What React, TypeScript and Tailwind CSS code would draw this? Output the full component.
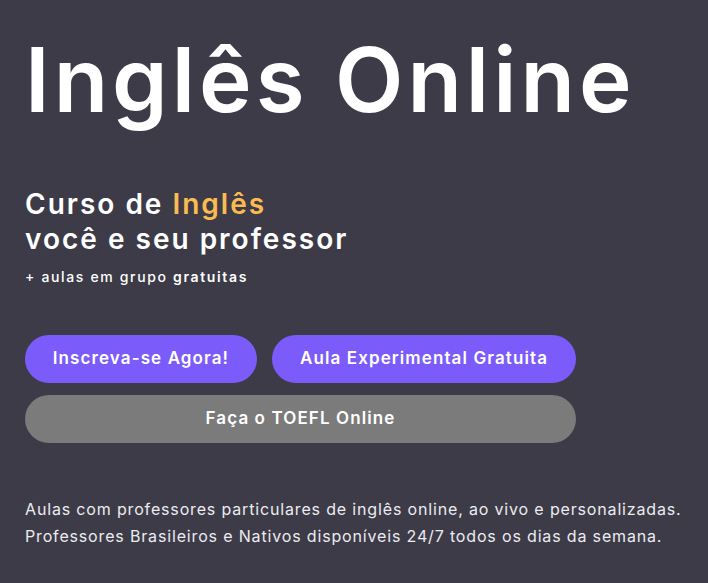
const App = () => {
    return (
        <div className="min-h-screen w-full bg-[#3c3b47] px-[25px] pt-[35px] pb-10 text-white font-['Inter',sans-serif]">
            <h1 className="text-[89px] leading-none font-semibold tracking-[4px]">Inglês Online</h1>

            <div className="mt-[63px]">
                <h2 className="text-[28px] leading-[35px] font-semibold tracking-[2px]">
                    Curso de <span className="text-[#fcbb51]">Inglês</span>
                    <br />
                    você e seu professor
                </h2>
                <p className="mt-[10px] text-sm font-medium tracking-[1.65px]">
                    + aulas em grupo <span className="font-semibold">gratuitas</span>
                </p>
            </div>

            <div className="mt-[48px] w-[551px] flex flex-col gap-3">
                <div className="flex gap-[15px]">
                    <button className="h-12 w-[232px] shrink-0 whitespace-nowrap rounded-full bg-[#7b5cfa] text-[17px] font-semibold tracking-[1.1px]">
                        Inscreva-se Agora!
                    </button>
                    <button className="h-12 flex-1 whitespace-nowrap rounded-full bg-[#7b5cfa] text-[17px] font-semibold tracking-[1.1px]">
                        Aula Experimental Gratuita
                    </button>
                </div>
                <button className="h-12 w-full whitespace-nowrap rounded-full bg-[#7b7b7b] text-[17px] font-semibold tracking-[1.1px]">
                    Faça o TOEFL Online
                </button>
            </div>

            <p className="mt-[53px] whitespace-nowrap text-[16px] leading-[27px] tracking-[0.84px] text-[#ececf0]">
                Aulas com professores particulares de inglês online, ao vivo e personalizadas.
                <br />
                Professores Brasileiros e Nativos disponíveis 24/7 todos os dias da semana.
            </p>
        </div>
    );
};

export default App;
